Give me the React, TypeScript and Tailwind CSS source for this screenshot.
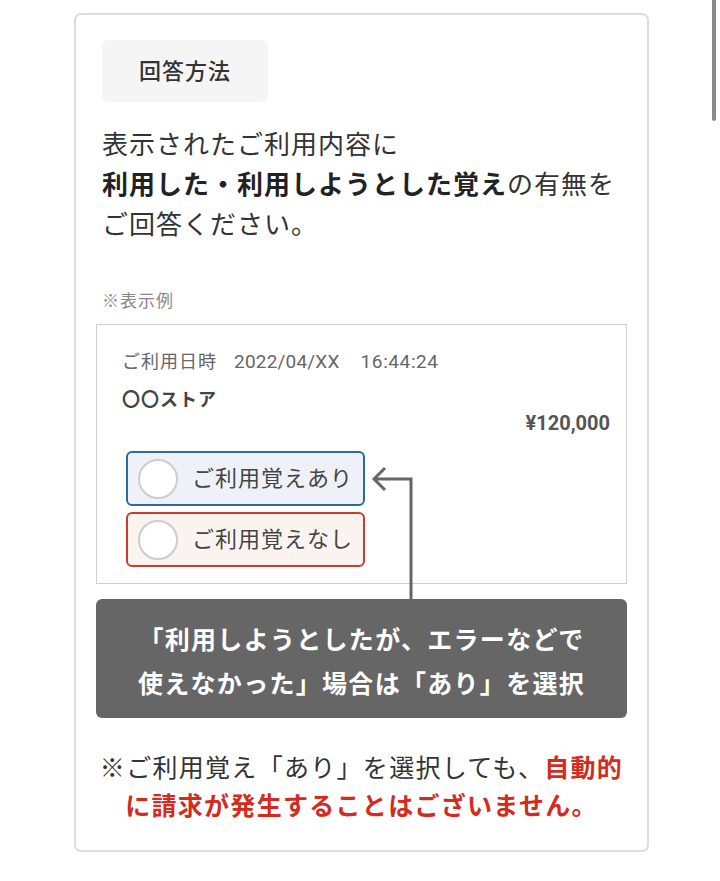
import React from 'react';

const font = { fontFamily: "Roboto, 'Noto Sans CJK JP', 'Noto Sans', sans-serif" };

function RadioOption({ label, tone }: { label: string; tone: 'blue' | 'red' }) {
  const box =
    tone === 'blue'
      ? 'border-[#2f6a9f] bg-[#eef2f8]'
      : 'border-[#cf3a2e] bg-[#fbf3f0]';
  return (
    <div className={`flex items-center w-[239px] h-[55px] border-2 rounded-[6px] pl-[10px] ${box}`}>
      <span className="w-[40px] h-[40px] rounded-full border-2 border-[#cdcdcd] bg-white shrink-0" />
      <span className="ml-[14px] text-[22px] leading-none tracking-[1px] text-[#444]">{label}</span>
    </div>
  );
}

export default function App() {
  return (
    <div className="min-h-[881px] bg-white relative" style={font}>
      {/* scrollbar thumb */}
      <div className="absolute right-[4px] top-0 w-[4px] h-[121px] rounded-b-full bg-[#8a8a8a]" />

      <div className="pt-[13px] pl-[74px]">
        <div className="w-[575px] border-2 border-[#dcdcdc] rounded-[7px] px-[20px] pt-[25px] pb-[24px]">
          <div className="ml-[6px] w-[166px] h-[62px] rounded-[6px] bg-[#f5f5f5] flex items-center justify-center text-[22px] tracking-[1px] font-medium text-[#333]">
            回答方法
          </div>

          <p className="ml-[6px] mt-[23px] text-[26px] leading-[40px] tracking-[1px] text-[#333]">
            表示されたご利用内容に
            <br />
            <b className="font-bold text-[#222]">利用した・利用しようとした覚え</b>の有無を
            <br />
            ご回答ください。
          </p>

          <p className="ml-[6px] mt-[44px] text-[17px] leading-[24px] tracking-[1px] text-[#888]">※表示例</p>

          <div className="relative mt-[11px]">
            <div className="border border-[#cfcfcf] pt-[24px] pb-[16px] pl-[25px] pr-[16px]">
              <div className="flex items-center text-[19px] leading-[26px] text-[#666]">
                <span className="tracking-[1px] text-[18px]">ご利用日時</span>
                <span className="ml-[17px] tracking-[0.2px]">2022/04/XX</span>
                <span className="ml-[21px] tracking-[0.6px]">16:44:24</span>
              </div>
              <div className="mt-[12px] text-[18px] leading-[26px] font-bold text-[#444] tracking-[1px]">〇〇ストア</div>
              <div className="-mt-[3px] text-right text-[20px] leading-[26px] font-bold text-[#555]">¥120,000</div>
              <div className="mt-[15px] ml-[4px] flex flex-col gap-[6px]">
                <RadioOption label="ご利用覚えあり" tone="blue" />
                <RadioOption label="ご利用覚えなし" tone="red" />
              </div>
            </div>

            <div className="mt-[15px] h-[119px] rounded-[6px] bg-[#666666] flex flex-col items-center justify-center text-white font-bold text-[25px] leading-[44px] tracking-[1.3px] pt-[8px]">
              <span>「利用しようとしたが、エラーなどで</span>
              <span>使えなかった」場合は「あり」を選択</span>
            </div>

            {/* connector arrow */}
            <svg
              className="absolute left-0 top-0 pointer-events-none"
              width="532"
              height="280"
              viewBox="0 0 532 280"
              fill="none"
            >
              <path
                d="M315 276 V155 H278 M289 144 L278 155 L289 166"
                stroke="#666"
                strokeWidth="3"
                strokeLinejoin="miter"
              />
            </svg>
          </div>

          <p className="mt-[32px] text-center text-[25px] leading-[38px] tracking-[1.3px] text-[#333]">
            ※ご利用覚え「あり」を選択しても、
            <b className="font-bold text-[#d42b1f]">自動的</b>
            <br />
            <b className="font-bold text-[#d42b1f]">に請求が発生することはございません。</b>
          </p>
        </div>
      </div>
    </div>
  );
}
